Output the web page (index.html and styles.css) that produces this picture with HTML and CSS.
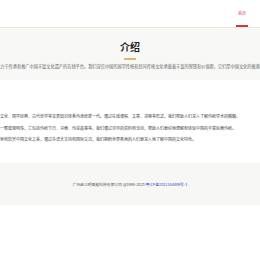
FILE: index.html
```
<!DOCTYPE html>
<html lang="zh-CN">
<head>
    <meta charset="UTF-8">
    <meta name="viewport" content="width=device-width, initial-scale=1.0">
    <title>介绍</title>
    <link rel="stylesheet" href="styles.css">
</head>
<body>

    <header class="top">
        <nav class="nav">
            <a href="#" class="nav-link active">首页</a>
        </nav>
    </header>

    <section class="intro">
        <h2 class="intro-title">介绍</h2>
        <span class="intro-bar"></span>
        <div class="wide">
            <p class="intro-text">我们是致力于传承和推广中国丰富文化遗产的在线平台。我们深信中国的国学传统和民间传统文化承载着丰富的智慧和价值观，它们是中国文化的根基和灵魂。</p>
        </div>
    </section>

    <section class="content">
        <div class="wide">
            <div class="content-box">
                <p>我们致力于将中华传统文化、国学经典、古代哲学等宝贵知识体系传承给新一代。通过在线课程、文章、讲座等形式，我们帮助人们深入了解传统学术的精髓。</p>
                <p>民俗文化是中华文化的一颗璀璨明珠，它包括传统节日、习俗、传说故事等。我们通过详尽的资料和活动，帮助人们更好地理解和体验中国的丰富民俗传统。</p>
                <p>欢迎全球的朋友一同探索和欣赏中国文化之美，通过多语言支持和国际交流，我们期盼世界各地的人们更深入地了解中国的文化特色。</p>
            </div>
        </div>
    </section>

    <footer class="footer">
        广州赵公明智能科技有限公司 @1998-2023 <a href="#" class="icp">粤ICP备2021144489号-1</a>
    </footer>

</body>
</html>
```

FILE: styles.css
```
body { margin: 0; font-family: "Noto Sans CJK SC", "Noto Sans", sans-serif; background: #fff; color: #333; overflow: hidden; }
p { margin: 0; }

.top { height: 27px; border-bottom: 1px solid #efe7d8; background: #fff; display: flex; justify-content: flex-end; padding-right: 12px; }
.nav { display: flex; }
.nav-link { display: flex; align-items: center; height: 25px; padding: 0 2px; font-size: 4px; color: #d04a4a; text-decoration: none; border-bottom: 2px solid transparent; }
.nav-link.active { border-bottom-color: #d03a3a; }

.intro { background: #f8f8f7; padding: 13px 0 11px; display: flex; flex-direction: column; align-items: center; }
.intro-title { margin: 0; font-size: 10px; line-height: 12px; font-weight: bold; color: #1e1e1e; }
.intro-bar { display: block; width: 12px; height: 2px; margin-top: 5px; background: #e6b56e; }

.wide { display: flex; justify-content: center; }
.intro-text { margin-top: 3px; font-size: 4.2px; line-height: 6px; color: #666; white-space: nowrap; }

.content { padding-top: 31px; }
.content-box { flex: 0 0 340px; width: 340px; }
.content-box p { font-size: 4px; line-height: 11.5px; color: #444; white-space: nowrap; }

.footer { margin-top: 17px; background: #f7f7f6; padding: 19px 0 17px; text-align: center; font-size: 3.8px; line-height: 6px; color: #555; }
.icp { color: #3348c8; text-decoration: none; }
```
